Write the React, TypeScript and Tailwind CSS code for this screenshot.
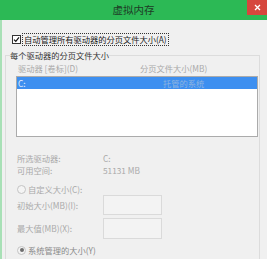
import React from "react";

const F = { fontFamily: '"Noto Sans CJK SC", "Noto Sans", sans-serif' };

function Radio({ checked }: { checked?: boolean }) {
  return (
    <span className="w-[9px] h-[9px] rounded-full border border-[#c4c4c4] bg-[#f4f4f4] flex items-center justify-center shrink-0">
      {checked && <span className="w-[4px] h-[4px] rounded-full bg-[#6d6d6d]" />}
    </span>
  );
}

export default function App() {
  return (
    <div className="w-[267px] h-[259px] overflow-hidden bg-[#f0f0f0] flex flex-col" style={F}>
      <div className="h-[20px] bg-[#2cb955] flex items-start shrink-0">
        <div className="w-[20px]" />
        <div className="flex-1 h-[20px] flex items-center justify-center text-[#1e3b26] text-[10.5px] leading-none">虚拟内存</div>
        <div className="w-[20px] h-[15px] bg-[#d6463d] flex items-center justify-center">
          <svg width="7" height="7" viewBox="0 0 7 7">
            <path d="M1 1L6 6M6 1L1 6" stroke="#fff" strokeWidth="1.3" />
          </svg>
        </div>
      </div>
      <div className="flex-1 flex border-l-2 border-[#a8e0b6] text-[8.25px] leading-none">
        <div className="flex-1 flex flex-col pl-[10px] pt-[13px]">
          <div className="flex items-center h-[12px] gap-[1px]">
            <span className="w-[9px] h-[9px] border border-[#333] bg-white flex items-center justify-center">
              <svg width="7" height="7" viewBox="0 0 7 7">
                <path d="M1 3.6L2.8 5.4L6 1.3" stroke="#111" strokeWidth="1.2" fill="none" />
              </svg>
            </span>
            <span className="border border-dotted border-[#333] px-[1px] h-[13px] flex items-center text-[#1a1a1a]">自动管理所有驱动器的分页文件大小(A)</span>
          </div>
          <fieldset className="mt-[5px] -ml-[7px] w-[255px] border border-[#dcdcdc] pl-[10px] pr-[1px] pb-[10px]">
            <legend className="text-[#333] -ml-[6px] px-[0px] h-[10px] leading-[10px]">每个驱动器的分页文件大小</legend>
            <div className="flex h-[12px] items-center mt-[2px] text-[#a9a9a9]">
              <span className="w-[124px] pl-[2px]">驱动器 [卷标](D)</span>
              <span>分页文件大小(MB)</span>
            </div>
            <div className="mt-[2px] h-[61px] border border-[#ababab] bg-white">
              <div className="h-[12px] bg-[#3d8ff0] flex items-center text-[#e6eefa]">
                <span className="w-[146px] pl-[1px]">C:</span>
                <span className="text-[#8fb4e0]">托管的系统</span>
              </div>
            </div>
            <div className="mt-[15px] flex flex-col text-[#a9a9a9]">
              <div className="flex h-[12px] items-center">
                <span className="w-[87px] pl-[1px]">所选驱动器:</span>
                <span>C:</span>
              </div>
              <div className="flex h-[12px] items-center">
                <span className="w-[87px] pl-[1px]">可用空间:</span>
                <span>51131 MB</span>
              </div>
              <div className="flex h-[12px] items-center gap-[2px] mt-[7px] pl-[1px]">
                <Radio />
                <span>自定义大小(C):</span>
              </div>
              <div className="flex items-center mt-[0px] h-[20px]">
                <span className="w-[87px] pl-[1px]">初始大小(MB)(I):</span>
                <span className="w-[59px] h-[20px] border border-[#dadada] bg-[#f3f3f3]" />
              </div>
              <div className="flex items-center mt-[3px] h-[21px]">
                <span className="w-[87px] pl-[1px]">最大值(MB)(X):</span>
                <span className="w-[59px] h-[21px] border border-[#dadada] bg-[#f3f3f3]" />
              </div>
              <div className="flex h-[12px] items-center gap-[2px] mt-[5px] pl-[1px] text-[#8a8a8a]">
                <Radio checked />
                <span>系统管理的大小(Y)</span>
              </div>
            </div>
          </fieldset>
        </div>
      </div>
    </div>
  );
}
